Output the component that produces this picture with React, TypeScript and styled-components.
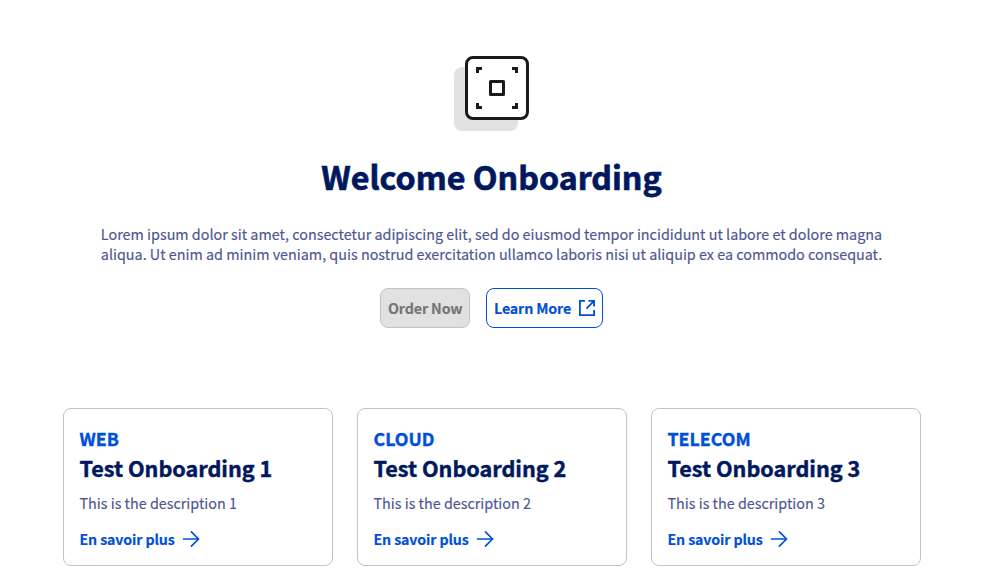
import React from "react";
import styled, { createGlobalStyle } from "styled-components";

const GlobalStyle = createGlobalStyle`
  *, *::before, *::after { box-sizing: border-box; }
  body {
    margin: 0;
    background: #fff;
    font-family: "Noto Sans CJK SC", "Noto Sans", sans-serif;
    color: #4d5592;
    -webkit-text-stroke: 0.15px currentColor;
  }
`;

const Page = styled.main`
  width: 983px;
  height: 578px;
  overflow: hidden;
  padding-top: 56px;
  display: flex;
  flex-direction: column;
  align-items: center;
`;

const Illustration = styled.svg`
  display: block;
  width: 75px;
  height: 75px;
`;

const Title = styled.h1`
  margin: 25px 0 28px;
  font-size: 32.2px;
  line-height: 40px;
  font-weight: 700;
  color: #00185e;
  -webkit-text-stroke: 0.7px currentColor;
  white-space: nowrap;
`;

const Description = styled.p`
  margin: 0 0 24px;
  width: 800px;
  font-size: 14.37px;
  line-height: 20px;
  text-align: center;
`;

const Actions = styled.div`
  display: flex;
  gap: 16px;
`;

const Button = styled.button<{ $width: number }>`
  display: flex;
  align-items: center;
  justify-content: space-between;
  width: ${({ $width }) => $width}px;
  height: 40px;
  padding: 0 6px 0 7px;
  border: 1px solid #0050d7;
  border-radius: 8px;
  background: #fff;
  color: #0050d7;
  font: 700 14.3px/20px "Noto Sans CJK SC", "Noto Sans", sans-serif;
  letter-spacing: -0.16px;
  white-space: nowrap;

  &:disabled {
    border-color: #c2c2c2;
    background: #e1e1e1;
    color: #757575;
  }
`;

const Icon = styled.svg`
  display: block;
  flex: none;
  width: 18px;
  height: 18px;
  fill: none;
  stroke: currentColor;
`;

const Cards = styled.section`
  display: grid;
  grid-template-columns: repeat(3, 270px);
  gap: 24px;
  margin: 80px 0 0 1px;
`;

const Card = styled.article`
  height: 158px;
  padding: 16px 15.5px;
  border: 1px solid #c2c2c2;
  border-radius: 8px;
  white-space: nowrap;
`;

const Category = styled.div`
  font-size: 17.8px;
  line-height: 26px;
  font-weight: 700;
  color: #0050d7;
  -webkit-text-stroke: 0.4px currentColor;
`;

const CardTitle = styled.h2`
  margin: 1px 0 9px;
  font-size: 21.6px;
  line-height: 32px;
  font-weight: 700;
  color: #00185e;
  -webkit-text-stroke: 0.45px currentColor;
`;

const CardText = styled.p`
  margin: 0 0 16px;
  font-size: 14.37px;
  line-height: 20px;
`;

const CardLink = styled.a`
  display: flex;
  align-items: center;
  gap: 7px;
  height: 20px;
  font-size: 14.2px;
  line-height: 20px;
  font-weight: 700;
  letter-spacing: -0.12px;
  color: #0050d7;
`;

const items = [
  { category: "WEB", title: "Test Onboarding 1", text: "This is the description 1" },
  { category: "CLOUD", title: "Test Onboarding 2", text: "This is the description 2" },
  { category: "TELECOM", title: "Test Onboarding 3", text: "This is the description 3" },
];

export default function App() {
  return (
    <>
      <GlobalStyle />
      <Page>
        <Illustration viewBox="0 0 75 75" aria-hidden="true">
          <rect x="0" y="11" width="64" height="64" rx="8" fill="#e1e1e1" />
          <rect x="12.5" y="1.5" width="61" height="61" rx="6.5" fill="#fff" stroke="#1a1a1a" strokeWidth="3" />
          <path
            d="M23.5 17v-4.5H28M58 12.5h4.5V17M62.5 47v4.5H58M28 51.5h-4.5V47"
            fill="none"
            stroke="#1a1a1a"
            strokeWidth="3"
          />
          <rect x="36.5" y="25.5" width="13" height="13" fill="none" stroke="#1a1a1a" strokeWidth="3" strokeLinejoin="round" />
        </Illustration>
        <Title>Welcome Onboarding</Title>
        <Description>
          Lorem ipsum dolor sit amet, consectetur adipiscing elit, sed do eiusmod tempor incididunt ut labore et dolore
          magna aliqua. Ut enim ad minim veniam, quis nostrud exercitation ullamco laboris nisi ut aliquip ex ea commodo
          consequat.
        </Description>
        <Actions>
          <Button $width={90} disabled>Order Now</Button>
          <Button $width={117}>
            Learn More
            <Icon viewBox="0 0 18 18" strokeWidth="1.8" aria-hidden="true">
              <path d="M7 1.9H1.9v14.2h14.2V11M10.5 1.9h5.6V7.5M16.1 1.9L8.4 9.6" />
            </Icon>
          </Button>
        </Actions>
        <Cards>
          {items.map((item) => (
            <Card key={item.title}>
              <Category>{item.category}</Category>
              <CardTitle>{item.title}</CardTitle>
              <CardText>{item.text}</CardText>
              <CardLink>
                En savoir plus
                <Icon viewBox="0 0 18 18" strokeWidth="1.7" strokeLinecap="round" strokeLinejoin="round" aria-hidden="true">
                  <path d="M1.6 9h15M9.4 1.8L16.6 9l-7.2 7.2" />
                </Icon>
              </CardLink>
            </Card>
          ))}
        </Cards>
      </Page>
    </>
  );
}
